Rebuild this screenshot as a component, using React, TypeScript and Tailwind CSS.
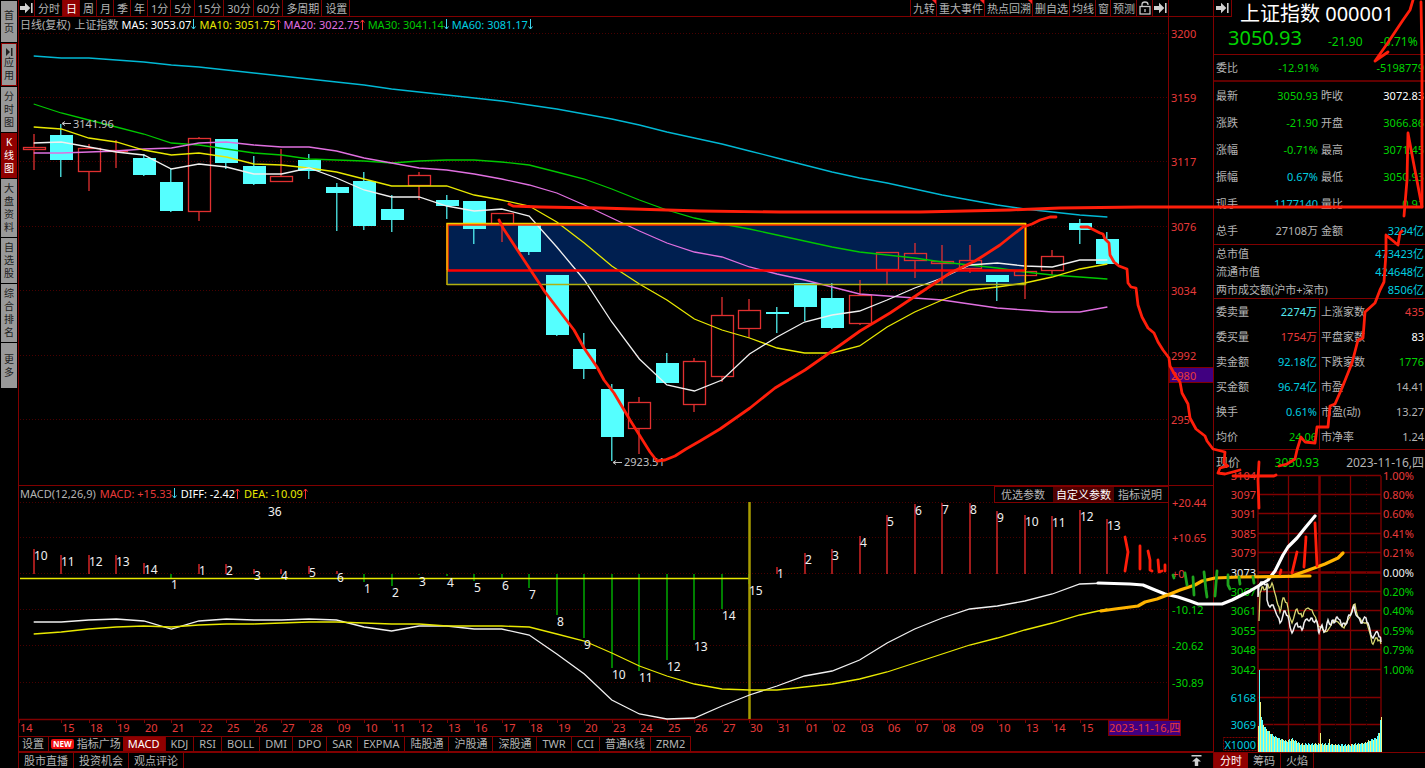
import type { ReactNode } from 'react';

type Pt = [number, number];

interface Candle {
  up: boolean;
  top: number;
  bottom: number;
  high: number;
  low: number;
}

interface Quote {
  label: string;
  value: string;
  color: string;
}

const X0 = 33.7;
const STEP = 27.53;
const ZERO_Y = 574;

const GREEN = 'text-[#00d200]';
const CYAN = 'text-[#00cfe0]';
const RED = 'text-[#e83a3a]';
const GREY = 'text-[#b4b4b4]';
const WHITE = 'text-white';

const xAt = (i: number) => X0 + STEP * i;

// direction, body top, body bottom, high, low
const CANDLES: Candle[] = (
  [
    [1, 147, 149, 134, 170], [0, 135, 160, 124, 177], [1, 148, 171, 144, 191], [1, 150, 151, 140, 168],
    [0, 158, 175, 154, 176], [0, 182, 211, 168, 212], [1, 138, 211, 137, 221], [0, 139, 163, 139, 169],
    [0, 166, 184, 156, 185], [1, 176, 181, 149, 182], [0, 160, 171, 154, 179], [0, 187, 193, 183, 231],
    [0, 181, 226, 172, 230], [0, 209, 220, 195, 232], [1, 175, 185, 172, 200], [0, 200, 206, 195, 219],
    [0, 201, 229, 201, 244], [1, 213, 224, 213, 242], [0, 225, 252, 224, 255], [0, 275, 335, 275, 336],
    [0, 349, 369, 333, 379], [0, 389, 437, 384, 461], [1, 402, 428, 397, 454], [0, 363, 383, 353, 383],
    [1, 361, 404, 358, 412], [1, 315, 376, 297, 382], [1, 310, 328, 299, 338], [0, 312, 314, 307, 333],
    [0, 283, 307, 283, 321], [0, 298, 328, 283, 329], [1, 295, 323, 280, 325], [1, 252, 269, 252, 285],
    [1, 253, 260, 243, 278], [1, 261, 263, 245, 285], [1, 260, 268, 245, 273], [0, 275, 282, 275, 301],
    [1, 271, 275, 268, 299], [1, 256, 270, 250, 275], [0, 223, 230, 219, 244], [0, 239, 264, 232, 264],
  ] as number[][]
).map(([up, top, bottom, high, low]) => ({ up: up === 1, top, bottom, high, low }));

const MA_LINES = [
  {
    color: '#00b8d4',
    ys: [56, 58, 58, 60, 62, 65, 67, 70, 73, 76, 79, 82, 85, 89, 92, 95, 98, 101, 105, 109, 114, 119, 125, 132, 138, 144, 151, 158, 165, 172, 178, 183, 189, 195, 200, 205, 209, 212, 215, 217],
  },
  {
    color: '#00c800',
    ys: [104, 113, 120, 127, 134, 143, 145, 149, 153, 155, 159, 160, 161, 163, 161, 160, 160, 162, 165, 172, 179, 189, 200, 210, 218, 224, 229, 235, 241, 247, 252, 255, 258, 262, 265, 268, 272, 275, 277, 279],
  },
  {
    color: '#e070e0',
    ys: [153, 153, 152, 151, 149, 148, 143, 142, 145, 147, 147, 151, 158, 163, 168, 170, 174, 179, 185, 193, 205, 218, 231, 243, 252, 257, 267, 274, 280, 287, 294, 296, 298, 300, 304, 308, 310, 312, 312, 307],
  },
  {
    color: '#e8e800',
    ys: [127, 129, 138, 142, 150, 155, 153, 157, 164, 165, 168, 172, 179, 186, 186, 186, 195, 200, 206, 222, 243, 266, 284, 300, 319, 330, 338, 348, 353, 353, 346, 327, 312, 300, 290, 287, 283, 277, 269, 264],
  },
  {
    color: '#f0f0f0',
    ys: [143, 142, 147, 152, 155, 169, 164, 167, 174, 174, 168, 178, 190, 197, 197, 206, 211, 209, 216, 247, 280, 322, 359, 385, 391, 380, 354, 337, 322, 315, 311, 300, 288, 278, 265, 263, 266, 267, 260, 260],
  },
];

const DIFF = [622, 622, 620, 619, 621, 629, 621, 619, 620, 620, 619, 620, 627, 631, 626, 626, 629, 629, 635, 654, 674, 700, 714, 719, 718, 706, 695, 686, 676, 671, 660, 643, 629, 618, 609, 606, 601, 594, 584, 583];
const DEA = [634, 632, 629, 627, 626, 627, 625, 624, 624, 623, 622, 622, 623, 624, 624, 626, 626, 626, 627, 634, 641, 653, 666, 676, 684, 689, 690, 690, 687, 684, 679, 672, 663, 654, 645, 638, 630, 623, 615, 609];

const BAR_TIPS = [549, 555, 555, 555, 563, 578, 564, 564, 569, 569, 566, 571, 582, 586, 575, 576, 581, 579, 588, 615, 638, 668, 671, 660, 640, 609, 584, 567, 553, 549, 536, 515, 504, 503, 503, 511, 515, 516, 510, 519];
const BAR_COUNTS = [10, 11, 12, 13, 14, 1, 1, 2, 3, 4, 5, 6, 1, 2, 3, 4, 5, 6, 7, 8, 9, 10, 11, 12, 13, 14, 15, 1, 2, 3, 4, 5, 6, 7, 8, 9, 10, 11, 12, 13];

const DATES = ['14', '15', '18', '19', '20', '21', '22', '25', '26', '27', '28', '09', '10', '11', '12', '13', '16', '17', '18', '19', '20', '23', '24', '25', '26', '27', '30', '31', '01', '02', '03', '06', '07', '08', '09', '10', '13', '14', '15'];

const PRICE_AXIS: [string, number][] = [
  ['3200', 34], ['3159', 98], ['3117', 162], ['3076', 227], ['3034', 291], ['2992', 356], ['295', 420],
];
const MACD_AXIS: [string, number][] = [
  ['+20.44', 503], ['+10.65', 538], ['+0', 574], ['-10.12', 610], ['-20.62', 646], ['-30.89', 683],
];

const MINI_LEVELS: [string, string, number][] = [
  ['3104', '1.00%', 476], ['3097', '0.80%', 495], ['3091', '0.60%', 514], ['3085', '0.41%', 534],
  ['3079', '0.21%', 553], ['3073', '0.00%', 573], ['3067', '0.20%', 592], ['3061', '0.40%', 611],
  ['3055', '0.59%', 631], ['3048', '0.79%', 650], ['3042', '1.00%', 670],
];

const MINI_PRICE: Pt[] = [
  [1258, 588], [1258, 597], [1259, 585], [1263, 582], [1267, 584], [1267, 600], [1270, 607], [1273, 605], [1275, 610],
  [1278, 617], [1280, 623], [1283, 615], [1285, 611], [1288, 616], [1290, 627], [1292, 633], [1294, 628], [1297, 623],
  [1299, 627], [1302, 630], [1304, 623], [1307, 619], [1309, 621], [1311, 618], [1313, 621], [1316, 620], [1318, 627],
  [1319, 633], [1322, 625], [1324, 632], [1326, 629], [1328, 620], [1331, 625], [1333, 620], [1335, 622], [1337, 617],
  [1340, 620], [1342, 626], [1344, 623], [1347, 623], [1349, 615], [1352, 612], [1354, 606], [1356, 615], [1358, 617],
  [1361, 623], [1363, 620], [1366, 618], [1368, 623], [1371, 635], [1373, 638], [1376, 632], [1378, 633], [1380, 637], [1381, 642],
];
const MINI_AVG: Pt[] = [
  [1259, 621], [1260, 593], [1262, 587], [1264, 590], [1267, 585], [1269, 588], [1272, 583], [1274, 590], [1276, 597],
  [1278, 605], [1280, 612], [1282, 602], [1284, 598], [1287, 603], [1289, 615], [1292, 623], [1295, 613], [1297, 609],
  [1300, 614], [1302, 617], [1304, 612], [1308, 608], [1312, 610], [1314, 615], [1317, 622], [1320, 627], [1324, 632],
  [1330, 627], [1335, 620], [1338, 622], [1344, 628], [1348, 620], [1352, 610], [1355, 604], [1358, 617], [1362, 622],
  [1367, 623], [1369, 630], [1372, 643], [1374, 642], [1377, 638], [1379, 640], [1381, 644],
];
const VOLUME_PROFILE: Pt[] = [
  [0, 26], [1, 82], [2, 50], [3, 36], [5, 27], [8, 23], [14, 17], [20, 14], [28, 11], [34, 13], [42, 8], [60, 8],
  [90, 7], [100, 8], [106, 9], [112, 12], [118, 14], [121, 20], [122, 33], [123, 34],
];

const points = (ps: Pt[]) => ps.map((p) => p.join(',')).join(' ');
const series = (ys: number[]) => ys.map((y, i) => `${xAt(i).toFixed(1)},${y}`).join(' ');

// Adds the small tick-by-tick movement between the known points
function jagged(ps: Pt[]): string {
  const out: string[] = [];
  ps.forEach(([x, y], i) => {
    out.push(`${x},${y}`);
    const next = ps[i + 1];
    if (!next) return;
    const my = (y + next[1]) / 2 + Math.sin(i * 2.7) * 2;
    out.push(`${(x + next[0]) / 2},${my.toFixed(1)}`);
  });
  return out.join(' ');
}

function volumeAt(x: number): number {
  const k = VOLUME_PROFILE.findIndex(([px]) => px >= x);
  if (k <= 0) return VOLUME_PROFILE[0][1];
  const [ax, ah] = VOLUME_PROFILE[k - 1];
  const [bx, bh] = VOLUME_PROFILE[k];
  const base = ah + ((bh - ah) * (x - ax)) / (bx - ax);
  if (x === 62) return 19;
  if (x === 71) return 13;
  return x < 3 ? base : Math.round(base + Math.sin(x * 1.9));
}

function ToBarIcon() {
  return (
    <svg width="13" height="12" viewBox="0 0 13 12" aria-hidden="true">
      <path d="M0 4h5V.8L10.300 6 5 11.200V8H0z" fill="#d0d0d0" />
      <path d="M11.800 1v10" stroke="#d0d0d0" strokeWidth="1.600" />
    </svg>
  );
}

function LockIcon() {
  return (
    <svg width="12" height="14" viewBox="0 0 12 14" fill="none" stroke="#c8c8c8" aria-hidden="true">
      <rect x="1" y="5.500" width="10" height="7.500" strokeWidth="1.300" />
      <path d="M3 5.500V3.500a3 2.500 0 0 1 6 0v.5M6 8v3" strokeWidth="1.300" />
    </svg>
  );
}

function Trend({ dir }: { dir: 'up' | 'down' }) {
  return (
    <svg width="5" height="11" viewBox="0 0 5 11" fill="none" aria-hidden="true">
      {dir === 'up' ? (
        <path d="M2.500 11V1M.5 3.500l2-2.500 2 2.500" stroke="#ff3030" />
      ) : (
        <path d="M2.500 0v10M.5 7.500l2 2.500 2-2.500" stroke="#40d8f0" />
      )}
    </svg>
  );
}

function Legend({ color, dir, children }: { color: string; dir: 'up' | 'down'; children: ReactNode }) {
  return (
    <span className={`flex items-center ${color}`}>
      {children}
      <Trend dir={dir} />
    </span>
  );
}

const RAIL = ['首页', '应用', '分时图', 'K线图', '大盘资料', '自选股', '综合排名', '更多'];
const RAIL_HEIGHT: Record<string, string> = {
  首页: 'h-[41px]',
  应用: 'h-[43px]',
  大盘资料: 'h-[58px]',
  综合排名: 'h-[58px]',
};

function SideRail() {
  return (
    <nav className="flex w-[19px] shrink-0 flex-col gap-px border-r border-[#800000] px-px pt-px">
      {RAIL.map((name) => (
        <button
          key={name}
          className={`flex w-4 flex-col items-center justify-center border text-[10px] leading-[13px] ${
            RAIL_HEIGHT[name] ?? 'h-[45px]'
          } ${name === 'K线图' ? 'bg-[#900000] text-white' : 'bg-[#999] text-[#222]'} ${
            name === '应用' || name === 'K线图' ? 'border-[#900000]' : 'border-transparent'
          }`}
        >
          {name === '应用' && (
            <svg width="7" height="8" viewBox="0 0 7 8" fill="#222" aria-hidden="true">
              <path d="M0 0l4 4-4 4zM5 0h1.500v8H5z" />
            </svg>
          )}
          <span className="w-[10px] break-all">{name}</span>
        </button>
      ))}
    </nav>
  );
}

const PERIODS = ['分时', '日', '周', '月', '季', '年', '1分', '5分', '15分', '30分', '60分', '多周期', '设置'];
const TOOLS = ['九转', '重大事件', '热点回溯', '删自选', '均线', '窗', '预测'];

function TopBar() {
  return (
    <header className="flex h-[17px] border-b border-[#800000] pr-[44px] leading-[17px]">
      <button aria-label="展开" className="flex w-4 items-center justify-center border-r border-[#800000]">
        <ToBarIcon />
      </button>
      {PERIODS.map((p) => (
        <button
          key={p}
          className={`border-r border-[#800000] pr-[2px] pl-[3px] ${p === '日' ? 'bg-[#900000] text-white' : GREY}`}
        >
          {p}
        </button>
      ))}
      <div className="ml-auto flex border-l border-[#800000]">
        {TOOLS.map((t, i) => (
          <button key={t} className={`relative border-r border-[#800000] pr-px pl-[2px] ${GREY}`}>
            {t}
            {i < 3 && (
              <svg className="absolute top-0 right-0" width="4" height="4" viewBox="0 0 4 4" aria-hidden="true">
                <path d="M0 0h4v4z" fill="#ff2020" />
              </svg>
            )}
          </button>
        ))}
        <button aria-label="锁定" className="flex w-4 items-center justify-center border-r border-[#800000]">
          <LockIcon />
        </button>
        <button aria-label="收起" className="flex w-4 items-center justify-center border-r border-[#800000]">
          <ToBarIcon />
        </button>
      </div>
    </header>
  );
}

function CandleMark({ c, i }: { c: Candle; i: number }) {
  const x = Math.round(xAt(i));
  const h = c.bottom - c.top;
  if (!c.up) {
    return (
      <g fill="#55ffff">
        <rect x={x - 1} y={c.high} width="1.500" height={c.low - c.high} opacity="0.8" />
        <rect x={x - 11} y={c.top} width="23" height={h} />
      </g>
    );
  }
  return (
    <g fill="none" stroke="#e03030" strokeWidth="1.300">
      <path d={`M${x} ${c.high}V${c.top}M${x} ${c.bottom}V${c.low}`} />
      <rect x={x - 10.5} y={c.top + 0.5} width="22" height={h} />
    </g>
  );
}

function KLineChart() {
  return (
    <section className="relative border-b border-[#800000]">
      <div className="absolute top-0 left-px flex h-[15px] items-center gap-[3px] whitespace-nowrap">
        <span className={GREY}>日线(复权)</span>
        <span className={`pl-px ${GREY}`}>上证指数</span>
        <Legend color={WHITE} dir="down">MA5: 3053.07</Legend>
        <Legend color="text-[#e8e800]" dir="up">MA10: 3051.75</Legend>
        <Legend color="text-[#e070e0]" dir="up">MA20: 3022.75</Legend>
        <Legend color="text-[#00c800]" dir="down">MA30: 3041.14</Legend>
        <Legend color="text-[#00cfe0]" dir="down">MA60: 3081.17</Legend>
      </div>
      <svg className="block w-full" viewBox="19 17 1194 468" fontSize="11">
        {PRICE_AXIS.map(([label, y]) => (
          <g key={label}>
            <path d={`M20 ${y - 0.5}H1169`} stroke="#480000" strokeDasharray="1 2" />
            <text x="1171" y={y + 4} fill="#e83a3a">{label}</text>
          </g>
        ))}
        <path d="M1168.500 17V486" stroke="#800000" />
        <rect x="447" y="224" width="578" height="61" fill="#001f50" />
        {CANDLES.map((c, i) => (
          <CandleMark key={i} c={c} i={i} />
        ))}
        {MA_LINES.map((l) => (
          <polyline key={l.color} points={series(l.ys)} fill="none" stroke={l.color} strokeWidth="1.300" />
        ))}
        <path d="M447 270.500H1025" stroke="#ff0000" strokeWidth="2.500" />
        <path d="M447.500 270V224.500H1025.500V270" fill="none" stroke="#ff3000" strokeWidth="2.500" />
        <path d="M447 285V223.500H1025.500V285" fill="none" stroke="#f0d000" strokeWidth="1.300" />
        <path d="M447 284.500H1026" stroke="#b0b010" strokeWidth="1.500" />
        <g fill="#c0c0c0">
          <path d="M62 123.500h9M65 121.500l-3 2 3 2M613 462.500h9M616 460.500l-3 2 3 2" fill="none" stroke="#c0c0c0" />
          <text x="73" y="128">3141.96</text>
          <text x="624" y="466">2923.51</text>
        </g>
        <rect x="1169.500" y="367.500" width="44" height="15" fill="#400080" stroke="#800000" />
        <text x="1171" y="380" fill="#e83a3a">2980</text>
      </svg>
    </section>
  );
}

function MacdChart() {
  return (
    <section className="relative">
      <div className="absolute top-0 left-px flex h-[15px] items-center gap-1 whitespace-nowrap">
        <span className={GREY}>MACD(12,26,9)</span>
        <Legend color={RED} dir="down">MACD: +15.33</Legend>
        <Legend color={WHITE} dir="up">DIFF: -2.42</Legend>
        <Legend color="text-[#e8e800]" dir="up">DEA: -10.09</Legend>
      </div>
      <div className="absolute top-0 right-[44px] flex h-[17px] border border-[#800000] leading-[15px]">
        <button className={`pr-2 pl-[6px] ${GREY}`}>优选参数</button>
        <button className="bg-[#500000] px-[3px] text-white">自定义参数</button>
        <button className={`pr-[6px] pl-1 ${GREY}`}>指标说明</button>
      </div>
      <svg className="block w-full" viewBox="19 486 1194 250" fontSize="11">
        {MACD_AXIS.map(([label, y]) => (
          <g key={label}>
            <path d={`M20 ${y - 0.5}H1169`} stroke="#480000" strokeDasharray="1 2" />
            <text x="1172" y={y + 4} fill={label.startsWith('+') ? '#e83a3a' : '#00d200'}>{label}</text>
          </g>
        ))}
        <path d="M1168.500 486V720" stroke="#800000" />
        <path d="M19 719.500H1169" stroke="#800000" strokeWidth="1.500" />
        {BAR_TIPS.map((tip, i) => (
          <path
            key={i}
            d={`M${Math.round(xAt(i))} ${ZERO_Y}V${tip}`}
            stroke={tip < ZERO_Y ? '#d42424' : '#00a800'}
            strokeWidth="1.500"
          />
        ))}
        <path d="M20 578.500H750" stroke="#e8e800" strokeWidth="1.300" />
        <path d="M749.500 502V719" stroke="#a89c00" strokeWidth="2.500" />
        <polyline points={series(DIFF)} fill="none" stroke="#f0f0f0" strokeWidth="1.300" />
        <polyline points={series(DEA)} fill="none" stroke="#e8e800" strokeWidth="1.300" />
        <g fill="#f0f0f0" fontSize="12">
          {BAR_TIPS.map((tip, i) => (
            <text key={i} x={Math.round(xAt(i))} y={tip + 11}>{BAR_COUNTS[i]}</text>
          ))}
          <text x="268" y="516">36</text>
        </g>
        <g fill="#e83a3a">
          {DATES.map((d, i) => {
            const x = i === 0 ? 19 : Math.round(xAt(i));
            return (
              <g key={i}>
                <path d={`M${x + 0.5} 720v3`} stroke="#800000" />
                <text x={x + 1} y="732">{d}</text>
              </g>
            );
          })}
          <rect x="1108.500" y="720.500" width="72" height="15" fill="#400080" stroke="#800000" />
          <text x="1109" y="732">2023-11-16,四</text>
        </g>
      </svg>
    </section>
  );
}

const INDICATORS = ['MACD', 'KDJ', 'RSI', 'BOLL', 'DMI', 'DPO', 'SAR', 'EXPMA', '陆股通', '沪股通', '深股通', 'TWR', 'CCI', '普通K线', 'ZRM2'];

function BottomTabs() {
  return (
    <footer>
      <div className="flex h-[17px] border-b-2 border-[#800000] leading-[14px] whitespace-nowrap">
        <button className={`border-t border-r border-[#800000] pr-1 pl-[3px] ${GREY}`}>设置</button>
        <button className={`flex items-center gap-[3px] border-t border-[#800000] px-[2px] ${GREY}`}>
          <span className="rounded-xs bg-[#f01010] px-[2px] text-[8px] leading-[10px] font-bold text-white">NEW</span>
          指标广场
        </button>
        {INDICATORS.map((name) => (
          <button
            key={name}
            className={`border-t border-r border-[#800000] ${
              name === 'MACD' ? 'bg-[#900000] px-[5px] text-white' : `px-[5px] ${GREY}`
            }`}
          >
            {name}
          </button>
        ))}
      </div>
      <div className="flex h-[15px] items-center leading-[15px]">
        {['股市直播', '投资机会', '观点评论'].map((name) => (
          <button key={name} className={`border-r border-[#800000] px-[5px] ${GREY}`}>{name}</button>
        ))}
        <button aria-label="返回顶部" className="mr-[11px] ml-auto">
          <svg width="11" height="11" viewBox="0 0 11 11" fill="#d0d0d0" aria-hidden="true">
            <path d="M.5 0h10v1.500H.5zM5.500 2.500l4.500 4H7.200V11H3.800V6.500H1z" />
          </svg>
        </button>
      </div>
    </footer>
  );
}

const QUOTES: Quote[] = [
  { label: '最新', value: '3050.93', color: GREEN },
  { label: '昨收', value: '3072.83', color: WHITE },
  { label: '涨跌', value: '-21.90', color: GREEN },
  { label: '开盘', value: '3066.86', color: GREEN },
  { label: '涨幅', value: '-0.71%', color: GREEN },
  { label: '最高', value: '3071.45', color: GREEN },
  { label: '振幅', value: '0.67%', color: CYAN },
  { label: '最低', value: '3050.93', color: GREEN },
  { label: '现手', value: '1177140', color: CYAN },
  { label: '量比', value: '0.91', color: GREEN },
  { label: '总手', value: '27108万', color: GREY },
  { label: '金额', value: '3294亿', color: CYAN },
];

const TOTALS: Quote[] = [
  { label: '总市值', value: '473423亿', color: CYAN },
  { label: '流通市值', value: '424648亿', color: CYAN },
  { label: '两市成交额(沪市+深市)', value: '8506亿', color: CYAN },
];

const BREADTH: Quote[] = [
  { label: '委卖量', value: '2274万', color: 'text-[#55e8f0]' },
  { label: '上涨家数', value: '435', color: RED },
  { label: '委买量', value: '1754万', color: RED },
  { label: '平盘家数', value: '83', color: WHITE },
  { label: '卖金额', value: '92.18亿', color: CYAN },
  { label: '下跌家数', value: '1776', color: GREEN },
  { label: '买金额', value: '96.74亿', color: CYAN },
  { label: '市盈', value: '14.41', color: GREY },
  { label: '换手', value: '0.61%', color: CYAN },
  { label: '市盈(动)', value: '13.27', color: GREY },
  { label: '均价', value: '24.06', color: GREEN },
  { label: '市净率', value: '1.24', color: GREY },
];

function QuoteTable({ rows, rowClass, cellClass = '' }: { rows: Quote[]; rowClass: string; cellClass?: string }) {
  const pairs = rows.filter((_, i) => i % 2 === 0).map((left, i) => [left, rows[i * 2 + 1]]);
  return (
    <table className="w-full table-fixed border-separate border-spacing-0">
      <tbody>
        {pairs.map(([left, right]) => (
          <tr key={left.label} className={rowClass}>
            <th scope="row" className={`w-[44px] pl-[2px] text-left font-normal whitespace-nowrap ${GREY}`}>{left.label}</th>
            <td className={`w-[62px] pr-[2px] text-right ${left.color} ${cellClass}`}>{left.value}</td>
            <th scope="row" className={`w-[50px] pl-px text-left font-normal whitespace-nowrap ${GREY}`}>{right.label}</th>
            <td className={`pr-px text-right whitespace-nowrap ${right.color}`}>{right.value}</td>
          </tr>
        ))}
      </tbody>
    </table>
  );
}

function IntradayChart() {
  return (
    <svg className="block w-full overflow-visible" viewBox="1214 474 211 278" fontSize="11">
      <g stroke="#800000" fill="none">
        {MINI_LEVELS.map(([left, , y]) => (
          <path key={left} d={`M1258 ${y - 0.5}H1381`} strokeWidth={left === '3073' ? 2.5 : 1.3} />
        ))}
        <path d="M1258 697.500H1381M1258 724.500H1381M1258 476V752M1288.500 476V752M1350.500 476V752M1381 476V752" strokeWidth="1.300" />
        <path d="M1319.500 476V752" strokeWidth="2.500" />
        <path d="M1273.500 476V752M1304.500 476V752M1335.500 476V752M1366.500 476V752" stroke="#3c0000" strokeDasharray="1 3" />
        <rect x="1223.500" y="737.500" width="34" height="13" strokeDasharray="2 1" />
      </g>
      {MINI_LEVELS.map(([left, right, y]) => {
        const color = y < 573 ? '#e83a3a' : y === 573 ? '#f0f0f0' : '#00d200';
        return (
          <g key={left} fill={color}>
            <text x="1256" y={y + 4} textAnchor="end">{left}</text>
            <text x="1383" y={y + 4}>{right}</text>
          </g>
        );
      })}
      <g fill="#00cfe0" textAnchor="end">
        <text x="1256" y="702">6168</text>
        <text x="1256" y="729">3069</text>
        <text x="1256" y="749">X1000</text>
      </g>
      {Array.from({ length: 124 }, (_, x) => {
        const h = volumeAt(x);
        const yellow = x === 2 || x === 62 || (x * 7) % 11 < 4;
        return <rect key={x} x={1258 + x} y={752 - h} width="1" height={h} fill={yellow ? '#f4f480' : '#55ffff'} />;
      })}
      <polyline points={jagged(MINI_AVG)} fill="none" stroke="#d8d870" strokeWidth="1.300" />
      <polyline points={jagged(MINI_PRICE)} fill="none" stroke="#f0f0f0" strokeWidth="1.500" />
    </svg>
  );
}

function QuotePanel() {
  return (
    <aside className="w-[212px] shrink-0 border-l border-[#800000]">
      <div className="relative h-[55px] border-b border-[#800000]">
        <button
          aria-label="展开"
          className="absolute top-0 left-0 flex h-[17px] w-[18px] items-center justify-center border-r border-b border-[#800000]"
        >
          <ToBarIcon />
        </button>
        <h1 className="pt-px pl-[26px] text-[20px] leading-[26px] whitespace-nowrap text-white">上证指数 000001</h1>
        <div className={`flex items-end pl-[14px] whitespace-nowrap ${GREEN}`}>
          <span className="w-[100px] text-[20px] leading-[22px]">3050.93</span>
          <span className="w-[52px] text-[12px]">-21.90</span>
          <span className="text-[12px]">-0.71%</span>
        </div>
      </div>
      <div className="flex h-[27px] items-center border-b-2 border-[#600000] pr-px pl-[2px]">
        <span className={`w-[44px] ${GREY}`}>委比</span>
        <span className={`w-[59px] text-right ${GREEN}`}>-12.91%</span>
        <span className={`ml-auto ${GREEN}`}>-5198779</span>
      </div>
      <QuoteTable rows={QUOTES} rowClass="h-[27px]" />
      <dl className="h-[55px] border-y border-[#800000] pr-px pl-[2px] leading-[18px]">
        {TOTALS.map((t) => (
          <div key={t.label} className="flex justify-between whitespace-nowrap">
            <dt className={GREY}>{t.label}</dt>
            <dd className={t.color}>{t.value}</dd>
          </div>
        ))}
      </dl>
      <QuoteTable rows={BREADTH} rowClass="h-[25px]" cellClass="border-r border-[#800000]" />
      <div className="flex h-[25px] items-center border-t border-[#800000] pr-px pl-[2px] text-[12px] whitespace-nowrap">
        <span className={`w-[44px] ${GREY}`}>现价</span>
        <span className={`w-[59px] text-right ${GREEN}`}>3050.93</span>
        <span className={`ml-auto ${GREY}`}>2023-11-16,四</span>
      </div>
      <IntradayChart />
      <div className="flex h-4 border-t border-[#800000] leading-[15px]">
        <button className="bg-[#900000] px-[6px] text-white">分时</button>
        <button className={`border-r border-[#800000] px-[5px] ${GREY}`}>筹码</button>
        <button className={`border-r border-[#800000] px-[5px] ${GREY}`}>火焰</button>
      </div>
    </aside>
  );
}

// Freehand strokes drawn over the whole terminal
const RED_STROKES: Pt[][] = [
  [[509, 204], [513, 206], [540, 207], [600, 208], [700, 211], [780, 212], [860, 212], [920, 212], [1010, 210], [1060, 208], [1140, 207], [1421, 207]],
  [[499, 220], [503, 228], [520, 254], [545, 292], [574, 330], [584, 348], [597, 367], [604, 380], [614, 393], [630, 420], [650, 452], [657, 461], [665, 460], [675, 456], [686, 449], [700, 441], [720, 429], [750, 408], [775, 388], [805, 370], [825, 356], [860, 331], [890, 313], [920, 293], [950, 273], [975, 261], [983, 256], [1000, 245], [1010, 237], [1023, 227], [1032, 224], [1040, 220], [1050, 217], [1056, 217]],
  [[1081, 227], [1088, 227], [1100, 233], [1103, 234], [1105, 239], [1109, 243], [1110, 255], [1114, 262], [1119, 266], [1127, 269], [1128, 283], [1131, 287], [1136, 288], [1138, 305], [1142, 317], [1148, 328], [1154, 333], [1158, 342], [1163, 350], [1169, 358], [1170, 366], [1175, 375], [1180, 382], [1182, 393], [1188, 404], [1190, 418], [1196, 429], [1205, 436], [1207, 441], [1210, 445], [1213, 449], [1225, 452], [1224, 463], [1228, 466], [1220, 468], [1218, 473], [1225, 474], [1240, 470]],
  [[1233, 476], [1274, 476], [1276, 475]],
  [[1259, 462], [1258, 480], [1259, 508]],
  [[1279, 466], [1287, 464], [1295, 459], [1297, 450], [1301, 437], [1305, 442], [1315, 443], [1317, 427], [1328, 427], [1330, 406], [1335, 404], [1342, 388], [1352, 363], [1358, 340], [1363, 338], [1365, 312], [1375, 303], [1380, 290], [1384, 282], [1386, 253], [1386, 235], [1398, 245], [1400, 233], [1402, 231]],
  [[1404, 216], [1407, 180], [1408, 133], [1413, 160], [1422, 207]],
  [[1421, 2], [1422, 60], [1422, 207]],
  [[1413, 0], [1410, 10], [1403, 20], [1387, 44], [1375, 61], [1388, 52]],
  [[1125, 537], [1128, 552], [1125, 571]],
  [[1140, 546], [1140, 569]],
  [[1148, 551], [1150, 560], [1150, 570], [1152, 571]],
  [[1158, 560], [1159, 572], [1162, 571]],
  [[1165, 565], [1165, 571]],
  [[1281, 570], [1280, 574]],
  [[1297, 552], [1292, 573]],
  [[1306, 537], [1304, 567]],
  [[1315, 523], [1317, 566]],
];
const GREEN_STROKES: Pt[][] = [
  [[1173, 575], [1174, 578]],
  [[1185, 573], [1187, 585]],
  [[1193, 577], [1194, 595]],
  [[1204, 572], [1206, 590], [1207, 597]],
  [[1217, 571], [1215, 596]],
  [[1228, 575], [1228, 585], [1230, 589]],
  [[1239, 577], [1240, 584]],
  [[1253, 577], [1254, 583]],
];
const WHITE_STROKE: Pt[] = [[1098, 583], [1130, 584], [1143, 585], [1155, 590], [1165, 594], [1178, 597], [1190, 601], [1198, 604], [1222, 604], [1232, 600], [1250, 591], [1260, 585], [1268, 580], [1275, 571], [1283, 555], [1288, 547], [1297, 538], [1305, 528], [1315, 516]];
const ORANGE_STROKES: Pt[][] = [
  [[1101, 611], [1115, 609], [1138, 606], [1145, 602], [1157, 599], [1170, 594], [1180, 590], [1195, 585], [1202, 581], [1215, 578], [1240, 577], [1310, 576]],
  [[1292, 576], [1317, 567], [1325, 564], [1338, 558], [1343, 553]],
];

function Annotations() {
  return (
    <svg
      className="pointer-events-none absolute inset-0 h-full w-full"
      viewBox="0 0 1425 768"
      preserveAspectRatio="none"
      fill="none"
      strokeWidth="2.800"
      strokeLinecap="round"
      strokeLinejoin="round"
      aria-hidden="true"
    >
      <polyline points={points(WHITE_STROKE)} stroke="#ffffff" strokeWidth="3.200" />
      {ORANGE_STROKES.map((s, i) => (
        <polyline key={i} points={points(s)} stroke="#ffb400" strokeWidth="3.200" />
      ))}
      {GREEN_STROKES.map((s, i) => (
        <polyline key={i} points={points(s)} stroke="#1ea51e" />
      ))}
      {RED_STROKES.map((s, i) => (
        <polyline key={i} points={points(s)} stroke="#ff1e0a" />
      ))}
    </svg>
  );
}

export default function App() {
  return (
    <div className="relative flex overflow-hidden bg-black font-['Noto_Sans','Noto_Sans_CJK_SC',sans-serif] text-[11px] leading-[15px]">
      <SideRail />
      <main className="min-w-0 flex-1">
        <TopBar />
        <KLineChart />
        <MacdChart />
        <BottomTabs />
      </main>
      <QuotePanel />
      <Annotations />
    </div>
  );
}
